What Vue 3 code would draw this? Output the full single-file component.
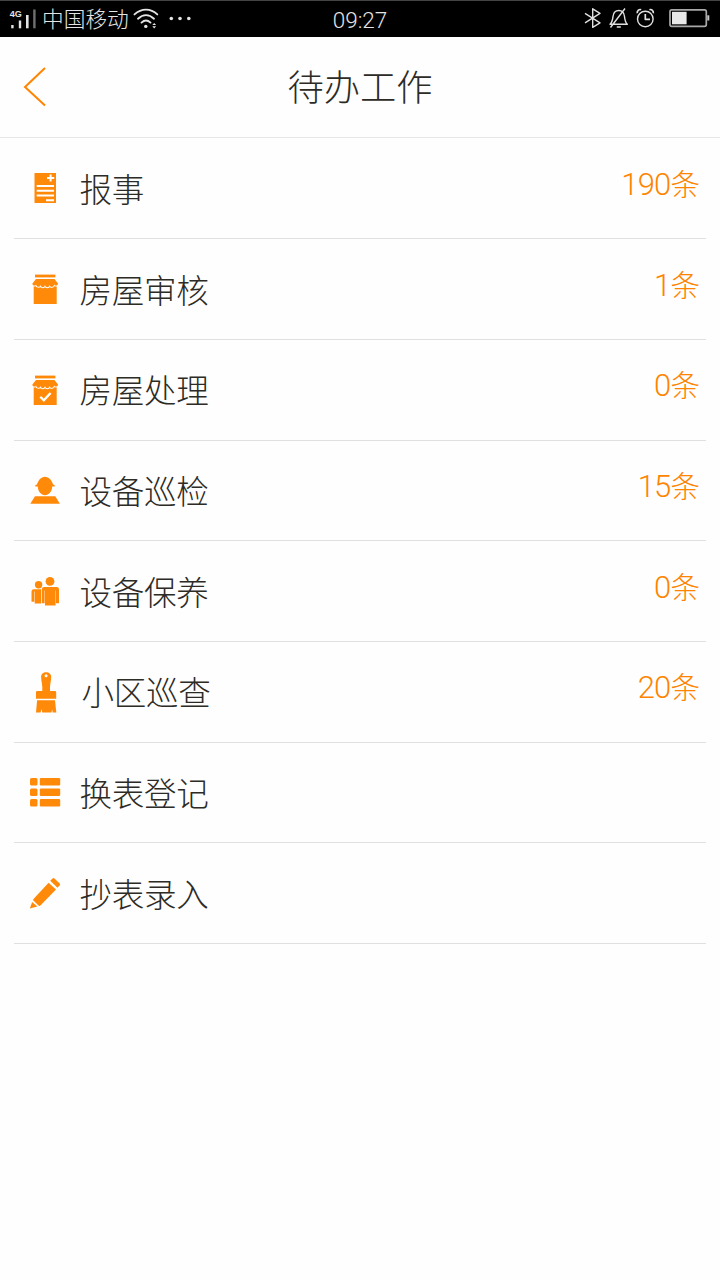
<script setup>
const rows = [
  { icon: 'report', label: '报事', count: 190 },
  { icon: 'shop', label: '房屋审核', count: 1 },
  { icon: 'shopCheck', label: '房屋处理', count: 0 },
  { icon: 'worker', label: '设备巡检', count: 15 },
  { icon: 'people', label: '设备保养', count: 0 },
  { icon: 'brush', label: '小区巡查', count: 20 },
  { icon: 'list', label: '换表登记', count: null },
  { icon: 'pencil', label: '抄表录入', count: null },
]
</script>

<template>
  <div class="screen">
    <div class="status">
      <div class="side">
        <svg class="signal" width="28" height="22" viewBox="9 8 28 22">
          <text x="9.8" y="17" class="net">4G</text>
          <g fill="#e4e4e4">
            <rect x="11.2" y="25" width="2.4" height="3.3" />
            <rect x="18.8" y="20.5" width="2.4" height="7.8" />
            <rect x="26" y="15" width="2.6" height="13.3" />
            <rect x="33.2" y="9.5" width="2.4" height="18.8" fill="#707070" />
          </g>
        </svg>
        <span class="carrier">中国移动</span>
        <svg class="wifi" width="62" height="24" viewBox="132 7 62 24">
          <g fill="none" stroke="#e4e4e4" stroke-width="1.9" stroke-linecap="round">
            <path d="M134.5 14.4C141.5 8 150.5 8 157.3 14.4" />
            <path d="M138 18.7C143 14 149 14 154 18.7" />
            <path d="M141.5 22.6C144.5 19.7 147.5 19.7 150.5 22.6" />
          </g>
          <g fill="#e4e4e4">
            <circle cx="145.8" cy="26.4" r="1.7" />
            <path d="M152.3 25L154.2 22.9L156.1 25ZM152.3 26.3L154.2 28.4L156.1 26.3Z" />
            <circle cx="171.3" cy="18.5" r="1.8" />
            <circle cx="180" cy="18.5" r="1.8" />
            <circle cx="188.8" cy="18.5" r="1.8" />
          </g>
        </svg>
      </div>
      <span class="time">09:27</span>
      <svg class="tray" width="130" height="28" viewBox="582 6 130 28">
        <g fill="none" stroke="#e0e0e0" stroke-width="1.4" stroke-linejoin="round">
          <path d="M585 14.3L600 23.8L592.7 28.3V9.8L600 14.3L585 23.8" />
          <path d="M610 25.3C612.5 23 612.7 20.5 613 17.5C613.4 13.8 615.4 11.5 618.8 11.5C622.2 11.5 624.1 13.8 624.5 17.5C624.8 20.5 625 23 627.3 25.3ZM610.5 28.5L625 9.5M616.8 28H620.8" />
          <circle cx="645.3" cy="20" r="7.8" />
          <path d="M645.3 15V20.3H650M637.3 14.2A3 3 0 0 1 641.2 10.7M649.4 10.7A3 3 0 0 1 653.3 14.2" stroke-width="1.7" />
        </g>
        <rect x="670" y="10.8" width="36.3" height="16.5" rx="1.8" fill="none" stroke="#a8a8a8" stroke-width="1.7" />
        <rect x="672" y="12.8" width="14.6" height="12.5" fill="#e8e8e8" />
        <rect x="707.3" y="16.3" width="2" height="5.2" fill="#c8c8c8" />
      </svg>
    </div>

    <header class="header">
      <svg class="back" width="26" height="42" viewBox="22 66 26 42">
        <path d="M45 68L25 87L45 105.5" fill="none" stroke="#ff8400" stroke-width="2" />
      </svg>
      <h1>待办工作</h1>
    </header>

    <main class="list">
      <div v-for="row in rows" :key="row.label" class="row">
        <svg class="icon" width="44" height="50" viewBox="0 -25 44 50" fill="#ff8a0a">
          <template v-if="row.icon === 'report'">
            <rect x="11.5" y="-15" width="21.5" height="30" />
            <path d="M24 -10H31.2M27.6 -13.6V-6.4M13.7 -2H31M13.7 2.8H31M13.7 7.5H31M23 12.2H31" stroke="#fff" stroke-width="2" />
          </template>
          <template v-else-if="row.icon === 'shop' || row.icon === 'shopCheck'">
            <rect x="12" y="-14.4" width="20.4" height="2.8" />
            <rect x="10.7" y="-3" width="23" height="18" />
            <path d="M13 -10H31.5L35 -5.5C35 -3.2 32 -2.7 31.2 -4.6C30.5 -1.4 27.3 -1.4 26.6 -4C25.8 -1 22.8 -1 22 -4C21.2 -1 18.2 -1 17.6 -4C16.8 -1.4 13.7 -1.6 13 -4.6C12.2 -2.7 9.4 -3.2 9.4 -5.5Z" stroke="#fff" stroke-width="2" paint-order="stroke" />
            <path v-if="row.icon === 'shopCheck'" d="M17.3 6.8L20.8 10.3L27.6 3" fill="none" stroke="#fff" stroke-width="2.3" />
          </template>
          <template v-else-if="row.icon === 'worker'">
            <path d="M11.7 -4.3C14 -5 14.3 -6.5 15 -8C16.4 -11.2 19 -13.3 22 -13.3C25 -13.3 27.6 -11.2 29 -8C29.7 -6.5 30 -5 32.3 -4.3L31.3 -3.4H29.2C29.2 1.5 25.6 5.2 22 5.2C18.4 5.2 14.8 1.5 14.8 -3.4H12.7Z" />
            <path d="M12 6.2H32.3L36.9 13.8H7.3Z" />
          </template>
          <template v-else-if="row.icon === 'people'">
            <circle cx="15.6" cy="-6.2" r="3.7" />
            <path d="M10.9 -1.7H18.2V12.4H11.7V0.5H11.2V10.8H8.5V0.5Q8.5 -1.7 10.9 -1.7Z" />
            <circle cx="27" cy="-9.6" r="4.4" />
            <path d="M21.2 -4H33.8Q36 -4 36 -1.8V12.2H33V-0.5H32.6V14.4H22V-0.5H21.6V12.2H18.9V-1.8Q18.9 -4 21.2 -4Z" />
          </template>
          <template v-else-if="row.icon === 'brush'">
            <path fill-rule="evenodd" d="M19.3 -1C19.8 -7 18.1 -11 18.1 -14.8C18.1 -17.8 20.2 -19.7 23.1 -19.7C26 -19.7 28.2 -17.8 28.2 -14.8C28.2 -11 26.6 -7 27 -1H32Q33.2 -1 33.2 0V6.7H13V0Q13 -1 14.2 -1ZM23.1 -17.8A1.5 1.5 0 1 0 23.1 -14.8A1.5 1.5 0 1 0 23.1 -17.8Z" />
            <path d="M14.1 8.3H32L33.3 20.4H29.8L29 17.5L28.6 20.4H19.2L18.6 17L17.5 20.4H13Z" />
          </template>
          <template v-else-if="row.icon === 'list'">
            <g v-for="y in [-14, -3.6, 6.9]" :key="y">
              <rect x="7" :y="y" width="7.5" height="7.5" rx="1.5" />
              <rect x="16.8" :y="y" width="20.4" height="7.5" rx="1.2" />
            </g>
          </template>
          <template v-else>
            <path d="M10.4 7.4Q9.9 6.7 10.5 6L25.6 -10.3L33 -3.4L17.4 12.6Q16.6 13.4 15.8 12.7Z" />
            <path d="M27.2 -12.2L29.6 -14.6Q30.5 -15.4 31.4 -14.6L36.7 -9.5Q37.5 -8.6 36.7 -7.7L34.5 -5.3Z" />
            <path d="M9.2 8.9L14.3 13.6L6.8 15.6Z" />
          </template>
        </svg>
        <span class="label" :class="{ shifted: row.icon === 'brush' }">{{ row.label }}</span>
        <span v-if="row.count !== null" class="count"><span class="num">{{ row.count }}</span>条</span>
      </div>
    </main>
  </div>
</template>

<style>
body {
  margin: 0;
  background: #fefefe;
}
</style>

<style scoped>
.screen {
  width: 720px;
  height: 1280px;
  box-sizing: border-box;
  overflow: hidden;
  background: #fefefe;
  font-family: Roboto, "Noto Sans CJK SC", sans-serif;
  font-weight: 300;
  color: #2d2b26;
}
.status {
  display: grid;
  grid-template-columns: 1fr auto 1fr;
  align-items: center;
  height: 37px;
  box-sizing: border-box;
  padding: 0 8px 0 9px;
  background: #000;
  border-top: 1px solid #444;
  color: #e4e4e4;
}
.side {
  display: flex;
  align-items: center;
}
.net {
  font: 700 9px "Liberation Sans", sans-serif;
  fill: #e4e4e4;
}
.carrier {
  margin-left: 5px;
  width: 90px;
  font: 300 21.7px/32px "Noto Sans CJK SC", sans-serif;
  padding-bottom: 2px;
  white-space: nowrap;
}
.time {
  font-size: 22.5px;
  line-height: 34px;
  padding-top: 1px;
  margin-left: -1px;
}
.tray {
  justify-self: end;
}
.header {
  display: grid;
  grid-template-columns: 60px 1fr 60px;
  align-items: center;
  height: 100.5px;
  box-sizing: border-box;
  border-bottom: 1px solid #e6e6e6;
}
.back {
  margin-left: 22px;
}
h1 {
  margin: 0;
  padding-bottom: 3px;
  font: 300 36.3px/50px "Noto Sans CJK SC", sans-serif;
  text-align: center;
}
.list {
  padding: 1px 14px 0;
}
.row {
  display: flex;
  align-items: center;
  height: 100.7px;
  box-sizing: border-box;
  padding: 0 6px 0 9px;
  border-bottom: 1.5px solid #e0e0e0;
}
.icon {
  flex: none;
}
.label {
  margin-left: 12.6px;
  margin-bottom: 1px;
  font: 300 32.6px/46px "Noto Sans CJK SC", sans-serif;
  letter-spacing: -0.4px;
}
.label.shifted {
  margin-left: 14.6px;
}
.count {
  display: flex;
  align-items: baseline;
  margin-left: auto;
  margin-bottom: 10px;
  font: 300 29.5px/40px "Noto Sans CJK SC", sans-serif;
  color: #ff8400;
}
.num {
  font-family: Roboto, sans-serif;
  font-size: 31px;
  letter-spacing: -0.8px;
}
</style>
